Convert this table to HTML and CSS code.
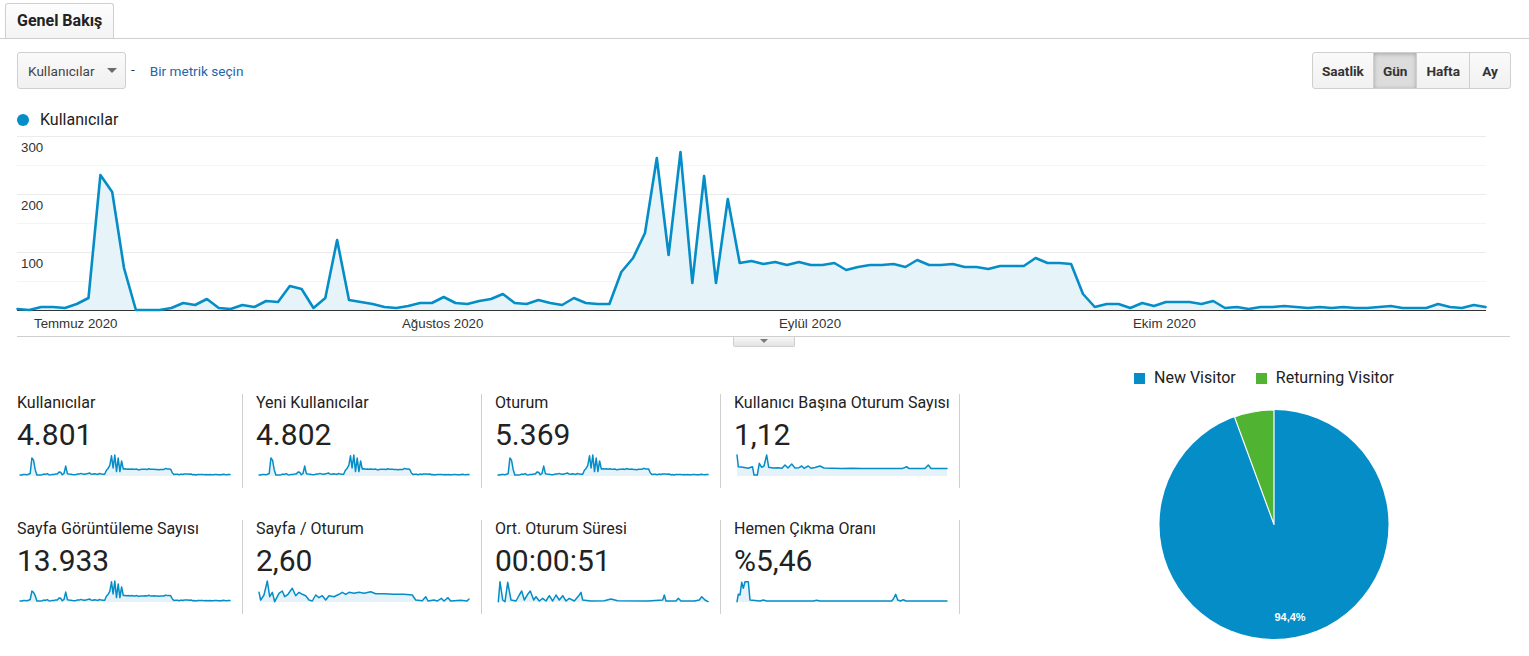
FILE: index.html
```html
<!DOCTYPE html>
<html lang="tr">
<head>
<meta charset="utf-8">
<title>Genel Bakış</title>
<link rel="stylesheet" href="styles.css">
</head>
<body>
<div class="tabs"><div class="tab">Genel Bakış</div></div>

<div class="toolbar">
  <div class="metric-select"><span>Kullanıcılar</span><span class="caret"></span></div>
  <span class="dash">-</span>
  <a class="metric-link">Bir metrik seçin</a>
  <div class="btn-group">
    <button class="btn">Saatlik</button><button class="btn active">Gün</button><button class="btn">Hafta</button><button class="btn">Ay</button>
  </div>
</div>

<div class="chart-legend"><span class="dot"></span><span>Kullanıcılar</span></div>

<div class="chart">
  <svg class="main-chart" width="1469" height="200" viewBox="0 0 1469 200">
    <line class="grid major" x1="0" y1="0.5" x2="1469" y2="0.5"/>
    <line class="grid minor" x1="0" y1="29.5" x2="1469" y2="29.5"/>
    <line class="grid major" x1="0" y1="58.5" x2="1469" y2="58.5"/>
    <line class="grid minor" x1="0" y1="87.5" x2="1469" y2="87.5"/>
    <line class="grid major" x1="0" y1="116.5" x2="1469" y2="116.5"/>
    <line class="grid minor" x1="0" y1="145.5" x2="1469" y2="145.5"/>
    <g id="main-area"></g>
    <line class="axis" x1="0" y1="174.5" x2="1469" y2="174.5"/>
    <g id="main-line"></g>
    <g class="ylabels">
      <text x="4" y="16">300</text>
      <text x="4" y="74">200</text>
      <text x="4" y="132">100</text>
    </g>
    <g class="xlabels">
      <text x="17" y="192">Temmuz 2020</text>
      <text x="385" y="192">Ağustos 2020</text>
      <text x="762" y="192">Eylül 2020</text>
      <text x="1116" y="192">Ekim 2020</text>
    </g>
  </svg>
</div>
<div class="toggle-row"><div class="toggle"><span class="tri"></span></div></div>

<div class="bottom">
  <div class="cards">
    <div class="card"><div class="card-label">Kullanıcılar</div><div class="card-value">4.801</div><svg class="spark" data-series="users" viewBox="0 0 210 26"></svg></div>
    <div class="card"><div class="card-label">Yeni Kullanıcılar</div><div class="card-value">4.802</div><svg class="spark" data-series="newusers" viewBox="0 0 210 26"></svg></div>
    <div class="card"><div class="card-label">Oturum</div><div class="card-value">5.369</div><svg class="spark" data-series="sessions" viewBox="0 0 210 26"></svg></div>
    <div class="card"><div class="card-label">Kullanıcı Başına Oturum Sayısı</div><div class="card-value">1,12</div><svg class="spark" data-series="spu" viewBox="0 0 210 26"></svg></div>
    <div class="card"><div class="card-label">Sayfa Görüntüleme Sayısı</div><div class="card-value">13.933</div><svg class="spark" data-series="pageviews" viewBox="0 0 210 26"></svg></div>
    <div class="card"><div class="card-label">Sayfa / Oturum</div><div class="card-value">2,60</div><svg class="spark" data-series="pps" viewBox="0 0 210 26"></svg></div>
    <div class="card"><div class="card-label">Ort. Oturum Süresi</div><div class="card-value">00:00:51</div><svg class="spark" data-series="duration" viewBox="0 0 210 26"></svg></div>
    <div class="card"><div class="card-label">Hemen Çıkma Oranı</div><div class="card-value">%5,46</div><svg class="spark" data-series="bounce" viewBox="0 0 210 26"></svg></div>
  </div>
  <div class="pie-col">
    <div class="pie-legend">
      <div class="item"><span class="swatch new"></span><span>New Visitor</span></div>
      <div class="item"><span class="swatch ret"></span><span>Returning Visitor</span></div>
    </div>
    <svg class="pie" width="234" height="234" viewBox="0 0 234 234">
      <circle cx="117" cy="116.5" r="114.5" fill="#058dc7"/>
      <path d="M117 116.5 L117 2 A114.5 114.5 0 0 0 77.53 9.02 Z" fill="#50b432" stroke="#ffffff" stroke-width="1.2" stroke-linejoin="round"/>
      <text class="pie-label" x="133" y="213">94,4%</text>
    </svg>
  </div>
</div>

<script src="script.js"></script>
</body>
</html>
```

FILE: styles.css
```css
* { box-sizing: border-box; }

body {
  margin: 0;
  width: 1529px;
  height: 656px;
  overflow: hidden;
  background: #fff;
  color: #222;
  font-family: Roboto, "Noto Sans", "Liberation Sans", Arial, sans-serif;
}

/* tab bar */
.tabs {
  display: flex;
  height: 39px;
  padding: 3px 0 0 5px;
  border-bottom: 1px solid #cfcfcf;
}
.tab {
  height: 35px;
  padding: 0 11px;
  border: 1px solid #cfcfcf;
  border-bottom: none;
  border-radius: 3px 3px 0 0;
  background: linear-gradient(#fdfdfd, #f4f4f4);
  font-size: 16px;
  font-weight: 700;
  line-height: 34px;
  color: #222;
}

/* toolbar */
.toolbar {
  display: flex;
  align-items: center;
  height: 37px;
  margin-top: 13px;
  padding: 0 18px 0 17px;
}
.metric-select {
  display: flex;
  align-items: center;
  width: 109px;
  height: 37px;
  padding-left: 10px;
  border: 1px solid #cfcfcf;
  border-radius: 3px;
  background: linear-gradient(#fafafa, #f0f0f0);
  font-size: 13.6px;
  color: #444;
}
.caret {
  width: 0;
  height: 0;
  margin-left: 12px;
  border-left: 5px solid transparent;
  border-right: 5px solid transparent;
  border-top: 5px solid #6b6b6b;
}
.dash {
  margin-left: 5px;
  font-size: 13.6px;
  color: #333;
  position: relative;
  top: -2px;
}
.metric-link {
  margin-left: 15px;
  font-size: 13.6px;
  color: #2465ac;
  cursor: pointer;
}
.btn-group {
  display: flex;
  margin-left: auto;
  height: 37px;
  border: 1px solid #cfcfcf;
  border-radius: 3px;
  overflow: hidden;
  background: linear-gradient(#fafafa, #f1f1f1);
}
.btn {
  min-width: 41px;
  height: 35px;
  padding: 0 9px;
  border: none;
  background: transparent;
  font-family: Roboto, "Noto Sans", Arial, sans-serif;
  font-size: 13.6px;
  font-weight: 700;
  color: #333;
}
.btn + .btn { border-left: 1px solid #cfcfcf; }
.btn.active {
  background: #dcdcdc;
  box-shadow: inset 0 1px 4px rgba(0, 0, 0, 0.25);
}

/* chart legend */
.chart-legend {
  display: flex;
  align-items: center;
  height: 18px;
  margin-top: 22px;
  padding-left: 17px;
  font-size: 16px;
  line-height: 18px;
  color: #222;
}
.chart-legend .dot {
  width: 12px;
  height: 12px;
  margin-right: 11px;
  border-radius: 50%;
  background: #058dc7;
}

/* main chart */
.chart {
  width: 1493px;
  margin: 7px 0 0 17px;
  border-bottom: 1px solid #cfcfcf;
}
.main-chart { display: block; overflow: visible; }
.grid { stroke-width: 1; }
.grid.major { stroke: #ebebeb; }
.grid.minor { stroke: #f4f4f4; }
.axis { stroke: #333; stroke-width: 1; }
.area { fill: #e6f3f9; stroke: none; }
.line { fill: none; stroke: #058dc7; stroke-linejoin: round; stroke-linecap: round; }
.ylabels text, .xlabels text {
  font-family: "Liberation Sans", Arial, sans-serif;
  font-size: 13.3px;
  fill: #333;
}

.toggle-row {
  display: flex;
  justify-content: center;
  width: 1493px;
  margin-left: 17px;
}
.toggle {
  display: flex;
  justify-content: center;
  width: 62px;
  height: 10px;
  padding-top: 2px;
  border: 1px solid #cfcfcf;
  border-top: none;
  border-radius: 0 0 2px 2px;
  background: linear-gradient(#f7f7f7, #e3e3e3);
}
.tri {
  width: 0;
  height: 0;
  border-left: 4px solid transparent;
  border-right: 4px solid transparent;
  border-top: 4px solid #7a7a7a;
}

/* bottom area */
.bottom { display: flex; align-items: flex-start; }
.cards {
  display: grid;
  grid-template-columns: 226px 239px 239px 239px;
  grid-auto-rows: 94px;
  align-content: start;
  row-gap: 32px;
  padding: 47px 0 0 17px;
}
.card {
  height: 94px;
  padding-left: 13px;
  border-right: 1px solid #cfcfcf;
}
.card:nth-child(4n+1) { padding-left: 0; }
.card-label {
  font-size: 16px;
  line-height: 18px;
  white-space: nowrap;
  color: #222;
}
.card-value {
  margin-top: 8px;
  font-size: 30px;
  line-height: 30px;
  color: #222;
}
.spark {
  display: block;
  width: 210px;
  height: 26px;
  margin: 3px 0 0 3px;
  overflow: visible;
}
.spark .area { fill: #e5f2fa; }

.pie-col {
  flex: 1;
  display: flex;
  flex-direction: column;
  padding: 22px 0 0 59px;
}
.pie-legend {
  display: flex;
  justify-content: center;
  align-items: center;
  height: 18px;
  padding-right: 20px;
  font-size: 16px;
  line-height: 18px;
  color: #222;
}
.pie-legend .item { display: flex; align-items: center; }
.pie-legend .item + .item { margin-left: 20px; }
.swatch { width: 11px; height: 11px; margin-right: 9px; }
.swatch.new { background: #058dc7; }
.swatch.ret { background: #50b432; }
.pie { display: block; margin: 21px auto 0; }
.pie-label {
  font-family: "Liberation Sans", Arial, sans-serif;
  font-size: 11px;
  font-weight: 700;
  fill: #fff;
  text-anchor: middle;
}
```

FILE: script.js
```js
(function () {
  var NS = 'http://www.w3.org/2000/svg';
  // pixel y of each daily point in the main chart (baseline = 310, 300 users = 136)
  var Y = [309,310,307,307,308,304,298,175,192,268,
           310,310,310,308,303,305,299,308,309,305,
           307,301,302,286,289,308,298,240,300,302,
           304,307,308,306,303,303,297,303,304,301,
           299,294,303,304,300,303,305,298,303,304,
           304,272,258,233,158,255,152,283,176,283,
           199,263,261,264,262,265,262,265,265,263,
           270,267,265,265,264,267,260,265,265,264,
           267,267,269,266,266,266,258,263,263,264,
           294,307,304,304,308,303,306,302,302,302,
           304,301,308,307,309,307,307,306,307,308,
           307,308,307,308,308,307,306,308,308,308,
           304,307,308,305,307];
  var H = Y.map(function (y) { return 310 - y; });

  function el(name, attrs) {
    var e = document.createElementNS(NS, name);
    for (var k in attrs) e.setAttribute(k, attrs[k]);
    return e;
  }
  function fmt(p) { return p[0].toFixed(1) + ',' + p[1].toFixed(1); }
  function draw(areaG, lineG, pts, base, sw) {
    var line = pts.map(fmt).join(' ');
    var first = pts[0], last = pts[pts.length - 1];
    areaG.appendChild(el('polygon', {
      'class': 'area',
      points: first[0].toFixed(1) + ',' + base + ' ' + line + ' ' + last[0].toFixed(1) + ',' + base
    }));
    lineG.appendChild(el('polyline', { 'class': 'line', points: line, 'stroke-width': sw }));
  }

  // main chart
  var step = 1468 / 124;
  var mainPts = Y.map(function (y, i) { return [i * step + 0.5, y - 136]; });
  draw(document.getElementById('main-area'), document.getElementById('main-line'), mainPts, 174, 2.6);

  // sparklines
  var sstep = 210 / 124;
  function fromHeights(hs) {
    return hs.map(function (h, i) { return [i * sstep, 22 - h * 20 / 158]; });
  }
  function pairs(a) {
    var out = [];
    for (var i = 0; i < a.length; i += 2) out.push([a[i], a[i + 1]]);
    return out;
  }
  var pv = H.map(function (h, i) {
    if (i === 7 || i === 8) return h * 0.58;
    if (i > 60 && i < 90) return h * 0.9;
    return h;
  });
  var sess = H.map(function (h, i) { return (i > 60 && i < 90) ? h * 1.02 : h; });

  var series = {
    users: fromHeights(H),
    newusers: fromHeights(H),
    sessions: fromHeights(sess),
    pageviews: fromHeights(pv),
    spu: pairs([0,2, 1.3,13.7, 6,14.3, 11,15.3, 15.5,13.7, 17,22, 20.3,22, 22.3,10.3, 24.7,14.3, 27,13,
                29.7,2, 31.7,14.3, 36,15, 41,14.7, 45,15.3, 48,12, 51,15, 54.7,11, 58,15, 62,14.7,
                64.7,13, 67,15.3, 71.3,13, 74,15.3, 78,14.5, 83,13, 87,15, 95,15.3, 105,15.5, 115,15.3,
                125,15.6, 135,15.5, 145,15.6, 155,15.5, 165,15.6, 169.7,13.7, 172,15.6, 180,15.6,
                188,15.5, 191.3,12, 194,15.5, 200,15.6, 210,15.5]),
    pps: pairs([0,13.3, 1.7,21, 5,16, 8.3,2, 10.7,17.7, 13.3,13.3, 15.7,22.7, 20,14.3, 23.3,12,
                25.7,17.7, 29,15.3, 33.3,9.3, 36.7,16.7, 40,13.3, 43.3,15.3, 46.7,16.7, 50,21,
                53.3,22, 56.7,16, 60,18.7, 63.3,16.7, 66.7,21, 70,16.7, 75,17.7, 80,15.3, 83.3,13.3,
                86.7,15.3, 90,13.3, 95,14.3, 100,13.3, 105,14.3, 111.7,12.7, 116.7,14.7, 125,14.7,
                135,15.3, 145,15.3, 153.3,16, 156.7,21, 163.3,21.7, 166.7,17.7, 169,22, 175,21,
                178.3,22, 182.3,19.3, 185,22, 189,18.7, 191.7,22, 201.7,21.3, 208,22, 210,20]),
    duration: pairs([0.3,22.7, 2,2.7, 4.7,21, 7,22.7, 9.7,3.3, 13,21, 18,22, 21.3,16, 23.7,12,
                26.3,21, 29.7,15.3, 32.3,12, 35.7,21, 38,17.7, 41.3,22, 44.7,19.3, 48,22, 51.3,16.7,
                54.7,22, 58,16, 61.3,21, 64.7,16.7, 68,22, 71.3,19.3, 76.3,22, 81.3,16, 83,13.3,
                84.7,21, 93,22, 106.3,21.7, 113,20, 119.7,21.7, 149.7,22, 164.7,21, 166.3,16, 168,22,
                178,22, 180.3,19.3, 183,22, 196.3,22, 201.3,21, 203.7,17.7, 207,21, 210,22.7]),
    bounce: pairs([0,22.7, 1.3,15.3, 3,16, 4.7,3.3, 6.3,9.3, 8,2.7, 11.3,2.7, 13,21, 23,22,
                26.3,21, 29.7,22, 76.3,22, 79.7,21.3, 83,22, 154.7,22, 156.3,20, 158.7,15.3,
                160.7,21, 163.7,22, 166.3,20.7, 169,22, 210,22])
  };

  var sparks = document.querySelectorAll('.spark');
  for (var i = 0; i < sparks.length; i++) {
    var svg = sparks[i];
    var pts = series[svg.getAttribute('data-series')];
    var a = el('g', {}), l = el('g', {});
    svg.appendChild(a);
    svg.appendChild(l);
    draw(a, l, pts, 23, 1.5);
  }
})();
```
